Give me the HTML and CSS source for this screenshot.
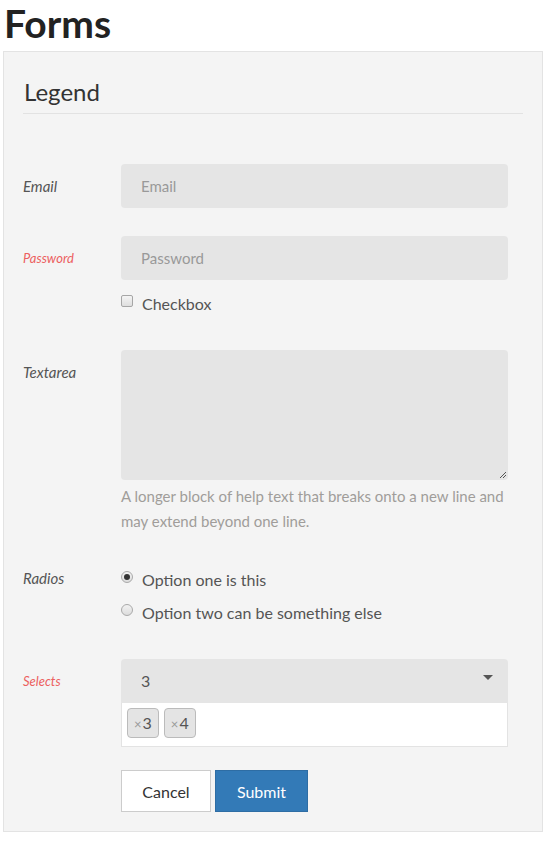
FILE: index.html
```html
<!DOCTYPE html>
<html>
<head>
<meta charset="utf-8">
<link rel="stylesheet" href="styles.css">
</head>
<body>
<h1 class="title">Forms</h1>
<div class="well">
  <div class="legend">Legend</div>
  <div class="row row-email">
    <div class="label">Email</div>
    <div class="field"><div class="input placeholder">Email</div></div>
  </div>
  <div class="row row-pass">
    <div class="label label-error">Password</div>
    <div class="field">
      <div class="input placeholder">Password</div>
      <div class="check-line"><span class="checkbox"></span><span>Checkbox</span></div>
    </div>
  </div>
  <div class="row row-textarea">
    <div class="label">Textarea</div>
    <div class="field">
      <div class="textarea"><svg class="grip" width="8" height="8" viewBox="0 0 8 8"><path d="M7 1L1 7M7 4L4 7" stroke="#555" stroke-width="1"/></svg></div>
      <p class="help">A longer block of help text that breaks onto a new line and may extend beyond one line.</p>
    </div>
  </div>
  <div class="row row-radios">
    <div class="label">Radios</div>
    <div class="field">
      <div class="radio-line"><span class="radio checked"></span><span>Option one is this</span></div>
      <div class="radio-line"><span class="radio"></span><span>Option two can be something else</span></div>
    </div>
  </div>
  <div class="row row-selects">
    <div class="label label-error">Selects</div>
    <div class="field">
      <div class="select"><span>3</span><span class="caret"></span></div>
      <div class="multi"><span class="tag"><span class="x">×</span>3</span><span class="tag"><span class="x">×</span>4</span></div>
    </div>
  </div>
  <div class="row row-buttons">
    <div class="label"></div>
    <div class="field buttons">
      <button class="btn btn-default">Cancel</button>
      <button class="btn btn-primary">Submit</button>
    </div>
  </div>
</div>
</body>
</html>
```

FILE: styles.css
```css
* { box-sizing: border-box; }
body {
  margin: 0;
  padding: 0 8px 0 3px;
  font-family: Lato, "Open Sans", sans-serif;
  color: #555;
  background: #fff;
}
.title {
  margin: 0;
  padding-left: 1px;
  font-size: 39px;
  font-weight: 700;
  color: #222;
  line-height: 46px;
  height: 51px;
}
.well {
  width: 540px;
  background: #f4f4f4;
  border: 1px solid #e3e3e3;
  padding: 19px 19px 19px 19px;
}
.legend {
  font-size: 24px;
  line-height: 42px;
  color: #333;
  padding-left: 1px;
  border-bottom: 1px solid #e2e2e2;
  height: 43px;
  margin-bottom: 50px;
}
.row {
  display: flex;
}
.label {
  width: 98px;
  flex: none;
  font-style: italic;
  font-size: 15px;
  color: #555;
  padding-top: 12px;
  line-height: 20px;
}
.label-error {
  color: #ec5f5f;
  font-size: 13px;
  padding-top: 12px;
}
.field { width: 387px; }
.input {
  height: 44px;
  background: #e5e5e5;
  border-radius: 4px;
  padding: 0 20px;
  font-size: 15px;
  line-height: 44px;
}
.placeholder { color: #999; }
.row-email { margin-bottom: 28px; }
.check-line, .radio-line {
  display: flex;
  align-items: center;
  font-size: 16px;
  color: #555;
  line-height: 22px;
}
.check-line { margin-top: 13px; }
.checkbox {
  width: 12px;
  height: 12px;
  border: 1px solid #a6a6a6;
  border-radius: 2px;
  background: linear-gradient(#f4f4f4, #dedede);
  margin: -6px 9px 0 0;
}
.row-pass { margin-bottom: 35px; }
.textarea {
  height: 130px;
  background: #e5e5e5;
  border-radius: 4px;
  position: relative;
}
.grip { position: absolute; right: 1px; bottom: 1px; }
.help {
  margin: 4px 0 0 0;
  font-size: 15px;
  line-height: 25px;
  color: #a09d9a;
}
.row-textarea { margin-bottom: 29px; }
.radio-line { height: 33px; }
.radio {
  width: 12px;
  height: 12px;
  border: 1px solid #a9a9a9;
  border-radius: 50%;
  background: linear-gradient(#f2f2f2, #dcdcdc);
  margin: -6px 9px 0 0;
  position: relative;
}
.radio.checked::after {
  content: "";
  position: absolute;
  left: 2px; top: 2px;
  width: 6px; height: 6px;
  border-radius: 50%;
  background: #333;
}
.row-radios { margin-bottom: 30px; }
.row-radios .label { padding-top: 4px; line-height: 22px; }
.select {
  height: 44px;
  background: #e5e5e5;
  border-radius: 4px 4px 0 0;
  padding: 0 15px 0 20px;
  font-size: 16px;
  line-height: 46px;
  color: #555;
  display: flex;
  justify-content: space-between;
  align-items: center;
}
.caret {
  width: 0; height: 0;
  border-left: 5px solid transparent;
  border-right: 5px solid transparent;
  border-top: 5px solid #555;
  margin-top: -8px;
}
.multi {
  height: 44px;
  background: #fff;
  border: 1px solid #e3e3e3;
  border-top: none;
  padding: 5px 5px;
  display: flex;
  gap: 5px;
}
.tag {
  height: 30px;
  border: 1px solid #bbb;
  border-radius: 4px;
  background: #e4e4e4;
  font-size: 16px;
  line-height: 28px;
  padding: 0 6px 0 6px;
  color: #555;
}
.tag .x { color: #999; font-size: 13px; margin-right: 1px; }
.row-selects { margin-bottom: 23px; }
.buttons { display: flex; gap: 4px; }
.btn {
  height: 42px;
  font-family: Lato, "Open Sans", sans-serif;
  font-size: 16px;
  border-radius: 0;
  padding: 0 20px;
  cursor: pointer;
}
.btn-default {
  width: 90px;
  background: #fff;
  border: 1px solid #ccc;
  color: #333;
}
.btn-primary {
  width: 93px;
  background: #337ab7;
  border: 1px solid #2e6da4;
  color: #fff;
}
```
